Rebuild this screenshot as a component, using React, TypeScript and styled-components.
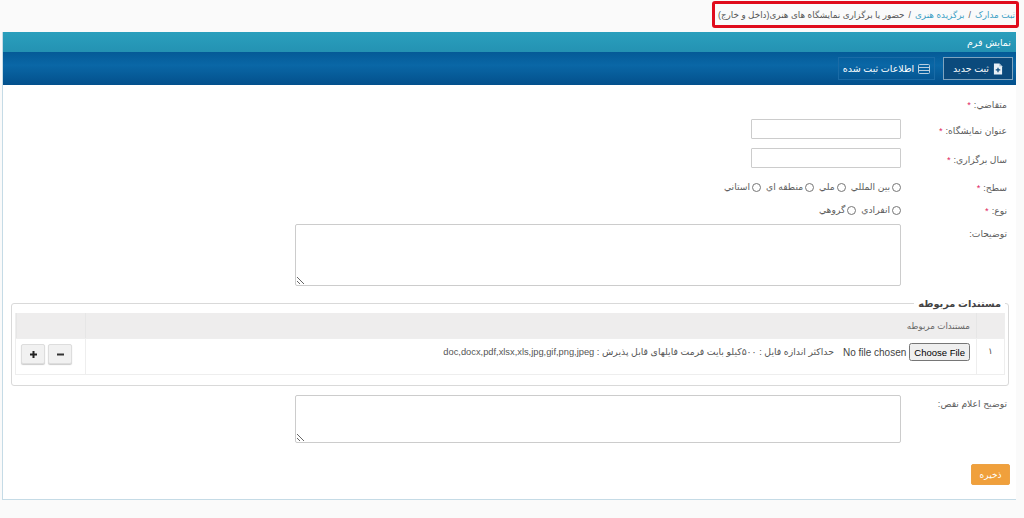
import React from "react";
import styled, { createGlobalStyle } from "styled-components";

const GlobalStyle = createGlobalStyle`
  html, body {
    margin: 0;
    padding: 0;
    background: #fafafa;
    font-family: "Liberation Sans", "DejaVu Sans", "Noto Sans", sans-serif;
    font-size: 9.2px;
    color: #5c5c5c;
  }
`;

const Page = styled.div`
  width: 1024px;
  height: 518px;
  box-sizing: border-box;
  padding: 1px 8px 0 2px;
  direction: rtl;
  overflow: hidden;
`;

const BreadcrumbRow = styled.div`
  display: flex;
  justify-content: flex-start;
  height: 31px;
`;

const Breadcrumb = styled.nav`
  width: 307px;
  height: 27px;
  box-sizing: border-box;
  margin-right: -3px;
  border: 3px solid #e00b1c;
  border-radius: 3px;
  display: flex;
  align-items: center;
  gap: 4px;
  padding-right: 1px;
  font-size: 8.8px;
  white-space: nowrap;
  color: #555;
`;

const Crumb = styled.span`
  color: #3a9fc4;
`;

const Panel = styled.section`
  border: 1px solid #c5dbe6;
  border-top: 0;
  border-right: 0;
  height: 468px;
  box-sizing: border-box;
  background: #fff;
`;

const PanelTitle = styled.header`
  height: 20px;
  background: linear-gradient(#2a9fbd, #2492b3);
  color: #fff;
  font-size: 9.5px;
  display: flex;
  align-items: center;
  padding-right: 5px;
`;

const Toolbar = styled.div`
  height: 33px;
  background: linear-gradient(#045a97, #0a67a6 40%, #03508c);
  display: flex;
  align-items: center;
  padding-right: 3px;
  gap: 8px;
`;

const ToolButton = styled.div<{ $active?: boolean; $width: number }>`
  width: ${(p) => p.$width}px;
  height: 23px;
  box-sizing: border-box;
  display: flex;
  align-items: center;
  justify-content: center;
  gap: 4px;
  color: #fff;
  font-size: 9.5px;
  border: 1px solid ${(p) => (p.$active ? "#7fa4bf" : "#1a6ba6")};
  background: ${(p) => (p.$active ? "#0b4a7c" : "transparent")};
`;

const FormBody = styled.div`
  padding: 10px 9px 0 8px;
`;

const Row = styled.div<{ $height: number; $top?: number }>`
  display: grid;
  grid-template-columns: 106px 1fr;
  height: ${(p) => p.$height}px;
  margin-top: ${(p) => p.$top ?? 0}px;
`;

const Label = styled.label<{ $offset?: number }>`
  font-size: 9.2px;
  color: #5c5c5c;
  padding-top: ${(p) => p.$offset ?? 3}px;
  line-height: 14px;
`;

const Star = styled.span`
  color: #e0245e;
  margin-right: 3px;
`;

const TextInput = styled.input`
  width: 150px;
  height: 20px;
  box-sizing: border-box;
  border: 1px solid #ccc;
  border-radius: 1px;
  background: #fff;
  display: block;
`;

const RadioGroup = styled.div`
  display: flex;
  gap: 5px;
  align-items: flex-start;
  padding-top: 2px;
`;

const RadioLabel = styled.label`
  display: flex;
  align-items: center;
  gap: 2px;
  font-size: 9.2px;
  line-height: 14px;
  color: #5c5c5c;
`;

const Radio = styled.input`
  width: 9px;
  height: 9px;
  margin: 0;
`;

const TextArea = styled.textarea<{ $height: number }>`
  width: 606px;
  height: ${(p) => p.$height}px;
  box-sizing: border-box;
  border: 1px solid #ccc;
  border-radius: 2px;
  display: block;
  margin: 0;
  background: #fff;
`;

const FieldSet = styled.fieldset`
  margin: 0 -2px 0 0;
  padding: 0 3px 9px;
  height: 88px;
  box-sizing: border-box;
  border: 1px solid #d9d9d9;
  border-radius: 3px;
  min-width: 0;
`;

const Legend = styled.legend`
  padding: 0 4px;
  margin-right: 0;
  font-size: 9.8px;
  font-weight: 700;
  color: #444;
`;

const DocTable = styled.div`
  display: grid;
  grid-template-columns: 28px 1fr 69px;
  grid-template-rows: 25px 36px;
  border: 1px solid #eee;
  border-top: 0;
  margin-top: 4px;
`;

const HeadCell = styled.div`
  background: #eeeded;
  border-left: 1px solid #e6e6e6;
  font-size: 8.7px;
  color: #666;
  display: flex;
  align-items: center;
  padding-right: 6px;
  &:last-child {
    border-left: 0;
  }
`;

const Cell = styled.div`
  border-left: 1px solid #eee;
  border-top: 1px solid #eee;
  display: flex;
  align-items: flex-start;
  padding: 4px 0 0;
  font-size: 9.2px;
  color: #555;
  &:last-child {
    border-left: 0;
  }
`;

const RowNumber = styled(Cell)`
  justify-content: center;
  padding-top: 7px;
  font-size: 9px;
`;

const FileInput = styled.input`
  font-size: 10px;
  font-family: "Liberation Sans", sans-serif;
  width: 131px;
  margin-right: 6px;
  color: #444;
  &::file-selector-button {
    font-size: 9.5px;
    height: 18px;
    padding: 0 3px;
    margin: 0 0 0 3px;
  }
`;

const Hint = styled.span`
  font-size: 9.3px;
  line-height: 18px;
  margin-right: 5px;
  white-space: nowrap;
`;

const Actions = styled.div`
  display: flex;
  gap: 3px;
  padding-right: 13px;
  padding-top: 1px;
`;

const SquareButton = styled.button`
  width: 24px;
  height: 20px;
  padding: 0;
  background: #f1f1f1;
  border: 1px solid #ddd;
  border-radius: 2px;
  box-shadow: 0 1px 1px #ccc;
  display: flex;
  align-items: center;
  justify-content: center;
`;

const SaveRow = styled.div`
  margin-top: 12px;
  display: flex;
`;

const SaveButton = styled.button`
  width: 39px;
  height: 21px;
  margin-right: -3px;
  background: #f0a03c;
  border: 1px solid #eda244;
  border-radius: 2px;
  color: #fff;
  font-size: 9px;
  padding: 0;
  font-family: inherit;
`;

const NewFileIcon = () => (
  <svg width="10" height="12" viewBox="0 0 11 13">
    <path d="M1 0.5h6l3 3v9H1z" fill="#e8f0f6" />
    <path d="M7 0.5v3h3z" fill="#9db8cc" />
    <path d="M5.5 5v5M3 7.5h5" stroke="#0b4a7c" strokeWidth="1.4" />
  </svg>
);

const ListIcon = () => (
  <svg width="12" height="10" viewBox="0 0 12 10" fill="none" stroke="#b9cfdf" strokeWidth="1">
    <rect x="0.5" y="0.5" width="11" height="9" rx="1" />
    <path d="M0.5 3.5h11M0.5 6.5h11" />
  </svg>
);

const PlusIcon = () => (
  <svg width="9" height="9" viewBox="0 0 9 9">
    <path d="M4.5 1v7M1 4.5h7" stroke="#222" strokeWidth="2" />
  </svg>
);

const MinusIcon = () => (
  <svg width="9" height="9" viewBox="0 0 9 9">
    <path d="M1 4.5h7" stroke="#333" strokeWidth="2" />
  </svg>
);

const levels = ["بين المللي", "ملي", "منطقه اي", "استاني"];
const kinds = ["انفرادي", "گروهي"];

const App: React.FC = () => {
  return (
    <Page>
      <GlobalStyle />
      <BreadcrumbRow>
        <Breadcrumb>
          <Crumb>ثبت مدارک</Crumb>
          <span>/</span>
          <Crumb>برگزیده هنری</Crumb>
          <span>/</span>
          <span>حضور یا برگزاری نمایشگاه های هنری(داخل و خارج)</span>
        </Breadcrumb>
      </BreadcrumbRow>

      <Panel>
        <PanelTitle>نمايش فرم</PanelTitle>
        <Toolbar>
          <ToolButton $active $width={70}>
            <NewFileIcon />
            ثبت جديد
          </ToolButton>
          <ToolButton $width={97}>
            <ListIcon />
            اطلاعات ثبت شده
          </ToolButton>
        </Toolbar>

        <FormBody>
          <Row $height={24}>
            <Label>
              متقاضي:<Star>*</Star>
            </Label>
            <div />
          </Row>
          <Row $height={29}>
            <Label $offset={5}>
              عنوان نمايشگاه:<Star>*</Star>
            </Label>
            <TextInput type="text" />
          </Row>
          <Row $height={30}>
            <Label $offset={5}>
              سال برگزاري:<Star>*</Star>
            </Label>
            <TextInput type="text" />
          </Row>
          <Row $height={23}>
            <Label>
              سطح:<Star>*</Star>
            </Label>
            <RadioGroup>
              {levels.map((l) => (
                <RadioLabel key={l}>
                  <Radio type="radio" name="level" />
                  {l}
                </RadioLabel>
              ))}
            </RadioGroup>
          </Row>
          <Row $height={23}>
            <Label>
              نوع:<Star>*</Star>
            </Label>
            <RadioGroup>
              {kinds.map((k) => (
                <RadioLabel key={k}>
                  <Radio type="radio" name="kind" />
                  {k}
                </RadioLabel>
              ))}
            </RadioGroup>
          </Row>
          <Row $height={74}>
            <Label>توضيحات:</Label>
            <TextArea $height={62} />
          </Row>

          <FieldSet>
            <Legend>مستندات مربوطه</Legend>
            <DocTable>
              <HeadCell />
              <HeadCell>مستندات مربوطه</HeadCell>
              <HeadCell />
              <RowNumber>۱</RowNumber>
              <Cell>
                <FileInput type="file" />
                <Hint>
                  حداکثر اندازه فایل : ۵۰۰کیلو بایت فرمت فایلهای قابل پذیرش : doc,docx,pdf,xlsx,xls,jpg,gif,png,jpeg
                </Hint>
              </Cell>
              <Cell>
                <Actions>
                  <SquareButton>
                    <MinusIcon />
                  </SquareButton>
                  <SquareButton>
                    <PlusIcon />
                  </SquareButton>
                </Actions>
              </Cell>
            </DocTable>
          </FieldSet>

          <Row $height={57} $top={9}>
            <Label $offset={2}>توضیح اعلام نقص:</Label>
            <TextArea $height={48} />
          </Row>

          <SaveRow>
            <SaveButton>ذخیره</SaveButton>
          </SaveRow>
        </FormBody>
      </Panel>
    </Page>
  );
};

export default App;
